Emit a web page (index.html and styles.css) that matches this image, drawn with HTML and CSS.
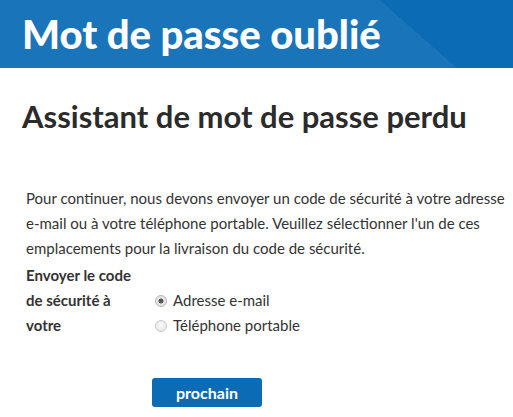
FILE: index.html
```html
<!DOCTYPE html>
<html lang="fr">
<head>
<meta charset="utf-8">
<title>Mot de passe oublié</title>
<link rel="stylesheet" href="styles.css">
</head>
<body>
<header class="banner">
  <h1 class="banner-title">Mot de passe oublié</h1>
</header>
<main class="content">
  <h2 class="page-title">Assistant de mot de passe perdu</h2>
  <p class="intro">Pour continuer, nous devons envoyer un code de sécurité à votre adresse e-mail ou à votre téléphone portable. Veuillez sélectionner l'un de ces emplacements pour la livraison du code de sécurité.</p>
  <form class="form">
    <div class="form-row">
      <div class="form-label">Envoyer le code de sécurité à votre</div>
      <div class="options">
        <label class="option"><input type="radio" name="dest" class="radio" checked> Adresse e-mail</label>
        <label class="option"><input type="radio" name="dest" class="radio"> Téléphone portable</label>
      </div>
    </div>
    <div class="actions">
      <button type="button" class="btn">prochain</button>
    </div>
  </form>
</main>
</body>
</html>
```
FILE: styles.css
```css
html, body {
  margin: 0;
  padding: 0;
  background: #fff;
}
body {
  font-family: Lato, "Open Sans", sans-serif;
  color: #333;
}
.banner {
  height: 68px;
  background: linear-gradient(41.4deg, #1a74ba 0, #1a74ba 302px, #0b6bb5 302px, #0b6bb5 100%);
  display: flex;
  align-items: center;
  padding-left: 22px;
}
.banner-title {
  margin: 0;
  color: #fff;
  font-size: 40px;
  font-weight: 900;
  line-height: 1;
}
.content {
  padding: 0 0 0 22px;
}
.page-title {
  margin: 28px 0 0 0;
  font-size: 31px;
  font-weight: 700;
  color: #2b2b2b;
  line-height: 40px;
}
.intro {
  margin: 50px 0 2px 4px;
  font-size: 15px;
  line-height: 25px;
  color: #333;
  padding-right: 2px;
}
.form {
  margin: 0 0 0 4px;
}
.form-row {
  display: flex;
}
.form-label {
  width: 122px;
  font-weight: 700;
  font-size: 15px;
  line-height: 25px;
}
.options {
  padding-top: 25px;
  display: flex;
  flex-direction: column;
}
.option {
  display: flex;
  align-items: center;
  font-size: 15px;
  line-height: 25px;
  gap: 6px;
}
.radio {
  appearance: none;
  -webkit-appearance: none;
  margin: 0 0 0 7px;
  width: 12px;
  height: 12px;
  border-radius: 50%;
  border: 1px solid #c9c9c9;
  background: radial-gradient(circle at 50% 40%, #fafafa 0%, #e2e2e2 100%);
  box-sizing: border-box;
}
.radio:checked {
  background: radial-gradient(circle, #555 0, #555 2.2px, #e8e8e8 2.8px, #dcdcdc 100%);
  border-color: #b8b8b8;
}
.actions {
  margin-top: 40px;
  padding-left: 126px;
}
.btn {
  width: 110px;
  height: 29px;
  border: 0;
  border-radius: 3px;
  background: #0b6bb5;
  color: #fff;
  font-family: Lato, sans-serif;
  font-weight: 700;
  font-size: 16px;
  cursor: pointer;
}
```
